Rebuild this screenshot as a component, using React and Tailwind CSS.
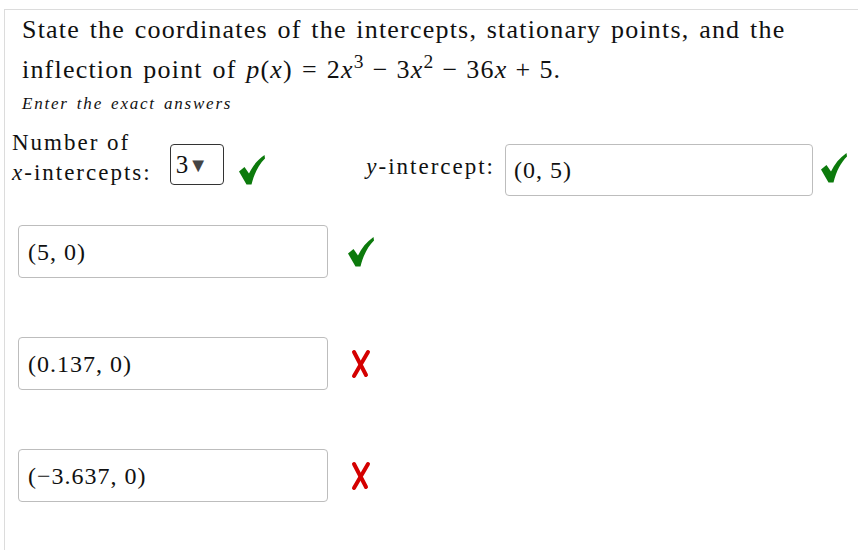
import React from 'react';

const Check = () => (
  <svg width="26" height="30" viewBox="0 0 26 30" className="shrink-0">
    <path
      d="M0 16.5 L5.5 12 L10 18.5 C13.5 11 18.5 5 25.5 0 L26 3.5 C20 9.5 15.5 17.5 12.5 29.5 L7.5 29.5 Z"
      fill="#0c7a0c"
    />
  </svg>
);

const Cross = () => (
  <svg width="22" height="30" viewBox="0 0 22 30" className="shrink-0">
    <path d="M4 3 L16 26" stroke="#d40000" strokeWidth="4" strokeLinecap="round" fill="none" />
    <path d="M18 3 L4 27" stroke="#d40000" strokeWidth="4" strokeLinecap="round" fill="none" />
  </svg>
);

const AnswerBox = ({ children }) => (
  <div className="flex items-center h-[53px] w-[310px] rounded-[4px] border border-[#bdbdbd] bg-white pl-[9px] text-[24px] tracking-[1px]">
    {children}
  </div>
);

const answers = [
  { value: '(5, 0)', ok: true },
  { value: '(0.137, 0)', ok: false },
  { value: '(\u22123.637, 0)', ok: false },
];

const App = () => {
  return (
    <div className="min-h-[550px] bg-white pt-[9px] pl-[4px] text-[#111] font-serif">
      <div className="min-h-[541px] border-l border-t border-[#dcdcdc] font-['Liberation_Serif','DejaVu_Serif',serif]">
        <div className="pl-[17px]">
          <p className="text-[26px] leading-[40px] tracking-[1.2px] [word-spacing:2px]">
            State the coordinates of the intercepts, stationary points, and the
            <br />
            inflection point of <i>p</i>(<i>x</i>)<span className="mx-[9px]">=</span>2<i>x</i>
            <sup>3</sup>
            <span className="mx-[8px]">−</span>3<i>x</i>
            <sup>2</sup>
            <span className="mx-[8px]">−</span>36<i>x</i>
            <span className="mx-[8px]">+</span>5.
          </p>
          <p className="mt-[2px] text-[17px] leading-[24px] italic tracking-[1.8px] [word-spacing:2px]">
            Enter the exact answers
          </p>
        </div>

        <div className="mt-[12px] flex items-start">
          <div className="flex items-start pl-[7px]">
            <div className="text-[23px] leading-[30px] tracking-[2px]">
              Number of
              <br />
              <i>x</i>-intercepts:
            </div>
            <div className="ml-[18px] mt-[16px] flex h-[41px] w-[54px] items-center rounded-[4px] border border-[#333] pl-[5px] text-[25px]">
              3<span className="text-[20px] text-[#444] leading-none">▼</span>
            </div>
            <div className="ml-[15px] mt-[27px]">
              <Check />
            </div>
          </div>

          <div className="ml-auto flex items-start pr-[11px]">
            <div className="mt-[24px] text-[23px] leading-[30px] tracking-[2px]">
              <i>y</i>-intercept:
            </div>
            <div className="ml-[10px] mt-[16px] flex h-[52px] w-[308px] items-center rounded-[4px] border border-[#bdbdbd] pl-[8px] text-[24px] tracking-[1px]">
              (0, 5)
            </div>
            <div className="ml-[8px] mt-[25px]">
              <Check />
            </div>
          </div>
        </div>

        <div className="mt-[29px] flex flex-col gap-[59px] pl-[13px]">
          {answers.map((a, i) => (
            <div key={i} className="flex items-center">
              <AnswerBox>{a.value}</AnswerBox>
              <div className={a.ok ? 'ml-[20px]' : 'ml-[22px]'}>{a.ok ? <Check /> : <Cross />}</div>
            </div>
          ))}
        </div>
      </div>
    </div>
  );
};

export default App;
